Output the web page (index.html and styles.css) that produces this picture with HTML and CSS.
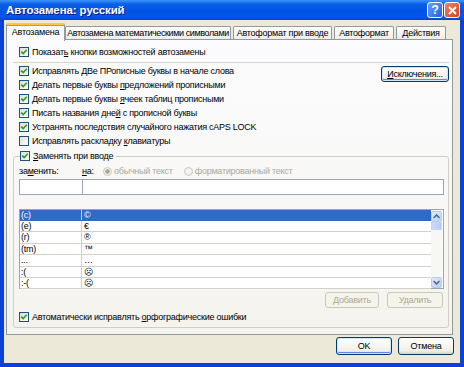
FILE: index.html
```html
<!DOCTYPE html>
<html lang="ru">
<head>
    <meta charset="UTF-8">
    <title>Автозамена: русский</title>
    <link rel="stylesheet" href="styles.css">
</head>
<body>
    <div class="window">
        <div class="titlebar">
            <span class="title">Автозамена: русский</span>
            <span class="tb-btn help">?</span>
            <span class="tb-btn close">
                <svg width="9" height="9" viewBox="0 0 9 9"><path d="M1 1L8 8M8 1L1 8" stroke="#fff" stroke-width="2"/></svg>
            </span>
        </div>
        <div class="client">
            <div class="tabs">
                <div class="tab active">Автозамена</div>
                <div class="tab t2">Автозамена математическими символами</div>
                <div class="tab t3">Автоформат при вводе</div>
                <div class="tab t4">Автоформат</div>
                <div class="tab t5">Действия</div>
            </div>
            <div class="panel">
                <div class="chk first"><span class="box on"></span><span>Показат<u>ь</u> кнопки возможностей автозамены</span></div>
                <div class="sep"></div>
                <div class="opts">
                    <div class="opt-list">
                        <div class="chk"><span class="box on"></span><span>Исправлять <u>Д</u>Ве ПРописные буквы в начале слова</span></div>
                        <div class="chk"><span class="box on"></span><span>Делать первые буквы <u>п</u>редложений прописными</span></div>
                        <div class="chk"><span class="box on"></span><span>Делать первые буквы <u>я</u>чеек таблиц прописными</span></div>
                        <div class="chk"><span class="box on"></span><span>Писать названия дне<u>й</u> с прописной буквы</span></div>
                        <div class="chk"><span class="box on"></span><span>Устранять после<u>д</u>ствия случайного нажатия cAPS LOCK</span></div>
                        <div class="chk"><span class="box"></span><span>Исправлять раскладку <u>к</u>лавиатуры</span></div>
                    </div>
                    <button class="btn except"><u>И</u>сключения...</button>
                </div>
                <fieldset class="group">
                    <legend class="chk"><span class="box on"></span><span><u>З</u>аменять при вводе</span></legend>
                    <div class="labels">
                        <span class="lbl-from">за<u>м</u>енить:</span>
                        <span class="lbl-to"><u>н</u>а:</span>
                        <span class="radio on"></span><span class="dim">обычный текст</span>
                        <span class="radio"></span><span class="dim">форматированный текст</span>
                    </div>
                    <div class="inputs">
                        <div class="field from"></div>
                        <div class="field to"></div>
                    </div>
                    <div class="list">
                        <div class="rows">
                            <div class="row sel"><span class="c1">(c)</span><span class="c2">©</span></div>
                            <div class="row"><span class="c1">(e)</span><span class="c2">€</span></div>
                            <div class="row"><span class="c1">(r)</span><span class="c2">®</span></div>
                            <div class="row"><span class="c1">(tm)</span><span class="c2">™</span></div>
                            <div class="row"><span class="c1">...</span><span class="c2">…</span></div>
                            <div class="row"><span class="c1">:(</span><span class="c2">☹</span></div>
                            <div class="row"><span class="c1">:-(</span><span class="c2">☹</span></div>
                        </div>
                        <div class="vscroll">
                            <span class="arrow"><svg width="7" height="5" viewBox="0 0 7 5"><path d="M0.5 4L3.5 1L6.5 4" fill="none" stroke="#4D6185" stroke-width="1.5"/></svg></span>
                            <span class="thumb"></span>
                            <span class="track"></span>
                            <span class="arrow"><svg width="7" height="5" viewBox="0 0 7 5"><path d="M0.5 1L3.5 4L6.5 1" fill="none" stroke="#4D6185" stroke-width="1.5"/></svg></span>
                        </div>
                    </div>
                    <div class="list-btns">
                        <button class="btn add" disabled>Добавить</button>
                        <button class="btn del" disabled>Удалить</button>
                    </div>
                    <div class="chk last"><span class="box on"></span><span>Автоматически исправлять <u>о</u>рфографические ошибки</span></div>
                </fieldset>
            </div>
            <div class="footer">
                <button class="btn dlg default">OK</button>
                <button class="btn dlg">Отмена</button>
            </div>
        </div>
    </div>
</body>
</html>
```

FILE: styles.css
```css
* {
    box-sizing: border-box;
}
body {
    margin: 0;
    font-family: "Liberation Sans", Arial, sans-serif;
    font-size: 9px;
    letter-spacing: -0.25px;
    color: #000;
}
u {
    text-decoration: underline;
    text-underline-offset: 1px;
}
.window {
    width: 464px;
    height: 367px;
    display: flex;
    flex-direction: column;
    background: #0842d9;
}
.titlebar {
    height: 20px;
    display: flex;
    align-items: center;
    padding: 0 4px 0 6px;
    background: linear-gradient(to bottom, #3d95ff 0%, #0a5fe6 20%, #0054e3 55%, #0257ee 85%, #0046c8 100%);
}
.title {
    flex: 1;
    color: #fff;
    font-weight: bold;
    font-size: 11.5px;
    letter-spacing: -0.1px;
    text-shadow: 1px 1px 0 #0a1883;
}
.tb-btn {
    width: 16px;
    height: 16px;
    border: 1px solid #fff;
    border-radius: 3px;
    display: flex;
    align-items: center;
    justify-content: center;
    color: #fff;
    font-weight: bold;
    font-size: 12px;
}
.help {
    background: linear-gradient(135deg, #6f9cf9, #2360e6);
    margin-right: 1px;
}
.close {
    background: linear-gradient(135deg, #e6876b, #d54019);
}
.client {
    flex: 1;
    margin: 0 4px 4px 4px;
    background: #ece9d8;
    padding: 3px 7px 0 2px;
    display: flex;
    flex-direction: column;
}
.tabs {
    display: flex;
    align-items: flex-start;
    height: 17px;
    margin-bottom: -1px;
}
.tab {
    height: 14px;
    margin-top: 3px;
    border: 1px solid #919b9c;
    border-bottom: none;
    border-radius: 2px 2px 0 0;
    background: linear-gradient(to bottom, #fff, #ecebe6);
    text-align: center;
    line-height: 13px;
    white-space: nowrap;
}
.tab.active {
    position: relative;
    z-index: 1;
    height: 18px;
    margin-top: 0;
    width: 59px;
    background: #fcfcfe;
    border-top: 2px solid #ffc83c;
    box-shadow: inset 0 1px 0 #e68b2c;
    line-height: 15px;
}
.t2 { width: 166px; letter-spacing: -0.4px; }
.t3 { width: 99px; margin-left: 2px; }
.t4 { width: 60px; margin-left: 2px; }
.t5 { width: 50px; margin-left: 2px; }
.panel {
    width: 447px;
    height: 296px;
    border: 1px solid #919b9c;
    background: linear-gradient(to bottom, #fcfcfe, #f4f3ee);
    padding: 5px 3px 0 6px;
    display: flex;
    flex-direction: column;
}
.chk {
    height: 14px;
    display: flex;
    align-items: center;
    white-space: nowrap;
}
.panel > .chk.first {
    margin-left: 6px;
}
.box {
    width: 10px;
    height: 10px;
    margin-right: 3px;
    border: 1px solid #1c5180;
    background: linear-gradient(135deg, #dcdcd7, #fff);
    flex: none;
}
.box.on {
    background: url("data:image/svg+xml,%3Csvg xmlns='http://www.w3.org/2000/svg' width='8' height='8'%3E%3Cpath d='M1.2 3.6L3.2 5.6L6.8 1.8' fill='none' stroke='%2321a121' stroke-width='1.6'/%3E%3C/svg%3E") center / 8px 8px no-repeat, linear-gradient(135deg, #dcdcd7, #fff);
}
.sep {
    height: 1px;
    margin-top: 3px;
    margin-bottom: 1px;
    background: #d6d3c7;
}
.opts {
    display: flex;
    justify-content: space-between;
    height: 84px;
    padding-left: 6px;
}
.btn {
    font: inherit;
    letter-spacing: inherit;
    height: 16px;
    padding: 0;
    border: 1px solid #003c74;
    border-radius: 3px;
    background: linear-gradient(to bottom, #fff, #f1efe6 80%, #d8d2bd);
    color: #000;
}
.except {
    width: 68px;
    margin-top: 2px;
    box-shadow: inset 0 0 0 1px #cee7ff, inset 0 -1px 0 1px #6982ee;
}
.group {
    margin: 1px 0 0 0;
    padding: 1px 4px 0 5px;
    width: 436px;
    height: 179px;
    border: 1px solid #d0d0bf;
    border-radius: 3px;
    min-width: 0;
}
.group legend {
    padding: 0 3px 0 0;
    margin-left: 1px;
}
.labels {
    height: 14px;
    display: flex;
    align-items: center;
    white-space: nowrap;
}
.lbl-from {
    width: 63px;
}
.lbl-to {
    width: 21px;
}
.dim {
    color: #aca899;
    margin-right: 11px;
}
.radio {
    width: 9px;
    height: 9px;
    border: 1px solid #cac8bb;
    border-radius: 50%;
    background: #f4f3ee;
    margin-right: 2px;
    flex: none;
}
.radio.on {
    background: radial-gradient(circle, #aca899 0 2px, #f4f3ee 2.5px);
}
.inputs {
    display: flex;
    height: 16px;
    margin-top: 1px;
}
.field {
    height: 16px;
    border: 1px solid #9ca6b0;
    background: #fff;
}
.field.from {
    width: 64px;
}
.field.to {
    width: 362px;
    margin-left: -1px;
}
.list {
    display: flex;
    width: 425px;
    height: 80px;
    margin-top: 14px;
    border: 1px solid #9ca6b0;
    background: #fff;
    padding: 0 1px 0 0;
}
.rows {
    flex: 1;
}
.row {
    display: flex;
    height: 11px;
    line-height: 10px;
    border-bottom: 1px solid #d4d0c8;
}
.row:nth-child(3), .row:nth-child(5) {
    height: 12px;
    line-height: 11px;
}
.c1 {
    width: 62px;
    padding-left: 1px;
    border-right: 1px solid #d4d0c8;
}
.c2 {
    padding-left: 2px;
}
.row.sel {
    background: #316ac5;
    color: #fff;
    border-bottom-color: #316ac5;
}
.row.sel .c1 {
    border-right-color: #c4d2ec;
}
.vscroll {
    width: 11px;
    display: flex;
    flex-direction: column;
    padding-top: 1px;
    background: #f7f7f3;
}
.arrow {
    height: 11px;
    display: flex;
    align-items: center;
    justify-content: center;
    border: 1px solid #b6caf3;
    border-radius: 2px;
    background: linear-gradient(135deg, #e2ebfd, #bcd0f8);
}
.thumb {
    height: 8px;
    background: linear-gradient(to right, #cad9fb, #b9cdf7);
    border: 1px solid #c4d4f8;
}
.track {
    flex: 1;
}
.list-btns {
    display: flex;
    justify-content: flex-end;
    gap: 8px;
    margin-top: 3px;
    padding-right: 1px;
}
.btn[disabled] {
    border-color: #c9c7ba;
    background: #f5f4ea;
    color: #aca899;
}
.add {
    width: 54px;
}
.del {
    width: 56px;
}
.chk.last {
    margin-top: 2px;
}
.footer {
    display: flex;
    justify-content: flex-end;
    gap: 6px;
    padding: 2px 0 0 0;
    margin-right: -1px;
}
.dlg {
    width: 56px;
    height: 18px;
}
.dlg.default {
    box-shadow: inset 0 0 0 1px #cee7ff, inset 0 -1px 0 1px #6982ee;
}
```
